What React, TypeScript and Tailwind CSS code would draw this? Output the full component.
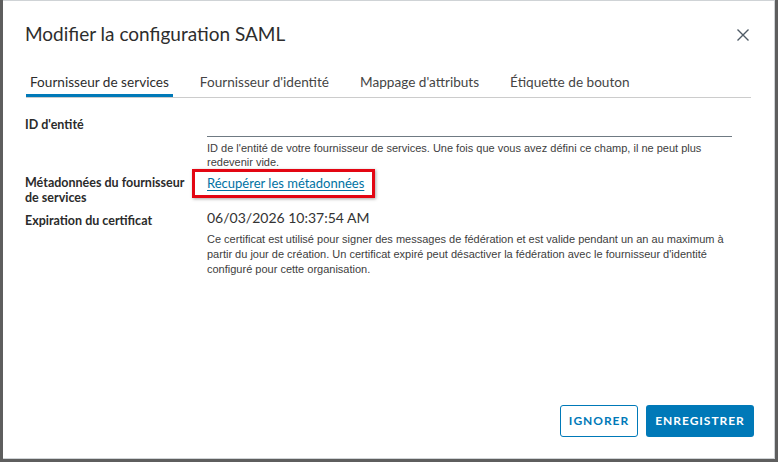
import React from "react";

const tabs = [
  "Fournisseur de services",
  "Fournisseur d'identité",
  "Mappage d'attributs",
  "Étiquette de bouton",
];

function CloseIcon() {
  return (
    <svg width="14" height="14" viewBox="0 0 14 14" fill="none">
      <path d="M1.5 1.5 L12.5 12.5 M12.5 1.5 L1.5 12.5" stroke="#4f5b66" strokeWidth="1.4" />
    </svg>
  );
}

export default function App() {
  return (
    <div className="h-[462px] w-[778px] overflow-hidden bg-[#5e5e5e]">
      <div
        className="ml-[3px] flex h-[459px] w-[772px] flex-col border-t border-r border-b border-[#cfd3d6] bg-white text-[#313131]"
        style={{ fontFamily: "Lato, 'Liberation Sans', sans-serif" }}
      >
        <div className="flex items-start justify-between pl-[22px] pr-[24px] pt-[20px]">
          <h1 className="text-[19px] leading-[26px] font-normal text-[#2d2d2d]">
            Modifier la configuration SAML
          </h1>
          <button className="mt-[7px]">
            <CloseIcon />
          </button>
        </div>

        <div className="mx-[23px] mt-[25px] flex gap-[23px] border-b border-[#cccccc]">
          {tabs.map((t, i) => (
            <div
              key={t}
              className={
                "px-[4px] pb-[5px] text-[13.6px] leading-[20px] " +
                (i === 0 ? "shadow-[inset_0_-3px_0_#0079b8] text-[#2d2d2d]" : "text-[#454545]")
              }
            >
              {t}
            </div>
          ))}
        </div>

        <div className="mt-[19px] grid grid-cols-[182px_1fr] pl-[22px] pr-[42px] text-[13px]">
          <div className="text-[12.5px] font-bold leading-[16px] text-[#2b2b2b]">ID d'entité</div>
          <div>
            <div className="h-[20px] border-b border-[#6f7a83]" />
            <p
              className="mt-[4px] text-[11px] leading-[14px] text-[#404040]"
              style={{ fontFamily: "'Liberation Sans', Arial, sans-serif" }}
            >
              ID de l'entité de votre fournisseur de services. Une fois que vous avez défini ce champ, il ne peut plus
              <br />
              redevenir vide.
            </p>
          </div>

          <div className="mt-[6px] text-[12.5px] font-bold leading-[15px] text-[#2b2b2b]">
            Métadonnées du fournisseur
            <br />
            de services
          </div>
          <div className="mt-[5px]">
            <span className="relative inline-block">
              <a href="#" className="text-[13px] leading-[15px] text-[#0072a3] underline underline-offset-2">
                Récupérer les métadonnées
              </a>
              <span className="pointer-events-none absolute -left-[15px] -right-[11px] -top-[5px] -bottom-[4px] border-[3px] border-[#e30613] shadow-[1px_1px_3px_rgba(0,0,0,0.35)]" />
            </span>
          </div>

          <div className="mt-[8px] text-[12.5px] font-bold leading-[16px] text-[#2b2b2b]">Expiration du certificat</div>
          <div className="mt-[4px]">
            <div className="text-[14px] leading-[18px] text-[#333]">06/03/2026 10:37:54 AM</div>
            <p
              className="mt-[5px] text-[11px] leading-[15px] text-[#404040]"
              style={{ fontFamily: "'Liberation Sans', Arial, sans-serif" }}
            >
              Ce certificat est utilisé pour signer des messages de fédération et est valide pendant un an au maximum à
              <br />
              partir du jour de création. Un certificat expiré peut désactiver la fédération avec le fournisseur d'identité
              <br />
              configuré pour cette organisation.
            </p>
          </div>
        </div>

        <div className="mt-auto flex justify-end gap-[8px] pb-[21px] pr-[20px]">
          <button className="h-[32px] w-[78px] rounded-[3px] border border-[#0079b8] text-[12px] font-bold tracking-[0.08em] text-[#0079b8]">
            IGNORER
          </button>
          <button className="h-[32px] w-[108px] rounded-[3px] bg-[#0079b8] text-[12px] font-bold tracking-[0.08em] text-white">
            ENREGISTRER
          </button>
        </div>
      </div>
    </div>
  );
}
